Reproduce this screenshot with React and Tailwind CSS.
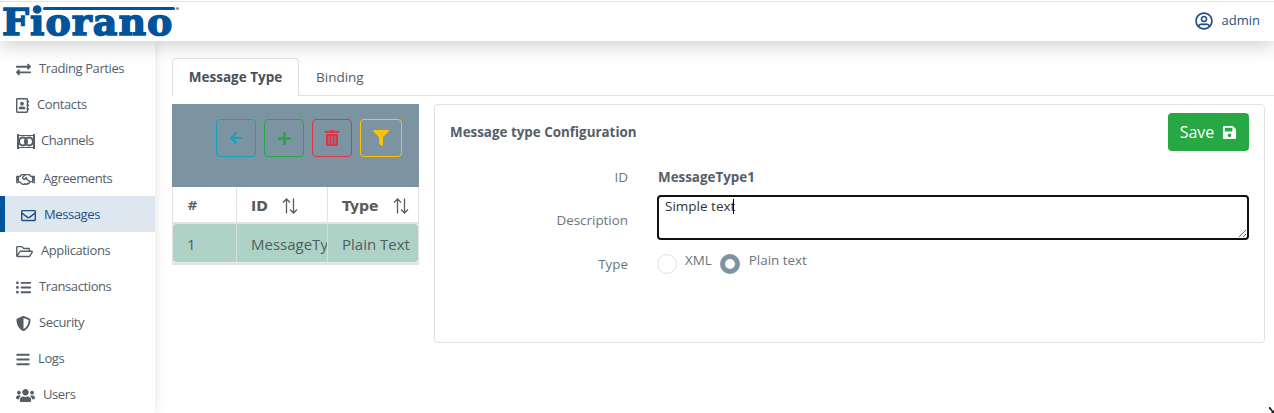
import React from "react";
import {
  FaExchangeAlt,
  FaRegAddressBook,
  FaRegHandshake,
  FaRegEnvelope,
  FaRegFolderOpen,
  FaListUl,
  FaShieldAlt,
  FaBars,
  FaUsers,
  FaRegUserCircle,
  FaSave,
  FaFilter,
  FaTrashAlt,
  FaPlus,
  FaArrowLeft,
} from "react-icons/fa";

const ChannelIcon = ({ className }) => (
  <svg viewBox="0 0 18 15" className={className} fill="none" stroke="currentColor">
    <path d="M1 0v15M17 0v15" strokeWidth="2" />
    <path d="M1 1.5h16M1 13.5h16" strokeWidth="1" />
    <circle cx="6" cy="7.5" r="4" strokeWidth="2.2" />
    <circle cx="12" cy="7.5" r="4" strokeWidth="2.2" />
  </svg>
);

const SortIcon = ({ className }) => (
  <svg viewBox="0 0 16 16" className={className} fill="none" stroke="#5b5b5b" strokeWidth="1.3">
    <path d="M4.5 15.5V1M1 4.5L4.5 1 8 4.5" />
    <path d="M11.5 0.5V15M8 11.5l3.5 3.5 3.5-3.5" />
  </svg>
);

const menu = [
  { label: "Trading Parties", icon: <FaExchangeAlt className="w-[15px] h-[15px]" />, gap: "gap-2" },
  { label: "Contacts", icon: <FaRegAddressBook className="w-[13px] h-[15px]" />, gap: "gap-2" },
  { label: "Channels", icon: <ChannelIcon className="w-[18px] h-[15px]" />, gap: "gap-[6px]", pad: "pl-[17px]" },
  { label: "Agreements", icon: <FaRegHandshake className="w-[19px] h-[15px]" />, gap: "gap-[8px]", extra: "mt-[2px]" },
  { label: "Messages", icon: <FaRegEnvelope className="w-[15px] h-[15px]" />, gap: "gap-[8px]", active: true },
  { label: "Applications", icon: <FaRegFolderOpen className="w-[17px] h-[15px]" />, gap: "gap-[8px]" },
  { label: "Transactions", icon: <FaListUl className="w-[15px] h-[15px]" />, gap: "gap-2" },
  { label: "Security", icon: <FaShieldAlt className="w-[15px] h-[15px]" />, gap: "gap-2" },
  { label: "Logs", icon: <FaBars className="w-[14px] h-[15px]" />, gap: "gap-2" },
  { label: "Users", icon: <FaUsers className="w-[19px] h-[15px]" />, gap: "gap-2" },
];

const App = () => {
  return (
    <div className="relative h-[413px] overflow-hidden bg-white font-['Open_Sans',sans-serif] text-[13px] text-[#555e68]">
      {/* HEADER */}
      <header className="relative z-20 h-[41px] bg-white shadow-[0_4px_20px_rgba(0,0,0,0.2)] flex items-center justify-between pr-[14px]">
        <div className="absolute top-px inset-x-0 h-px bg-[#e3e3e3]"></div>
        <div className="relative ml-[2px] h-[41px]">
          <div className="absolute left-[41px] top-[7px] w-[132px] h-[3px] bg-[#01549b] rounded-sm"></div>
          <div className="absolute left-[174px] top-[7px] w-[3px] h-[3px] bg-[#6f97bb] rounded-full"></div>
          <span className="block font-['DejaVu_Serif',serif] font-bold text-[38px] leading-[44px] tracking-[1px] text-[#01549b] [-webkit-text-stroke:1.5px_#01549b] whitespace-nowrap">
            Fiorano
          </span>
        </div>
        <div className="flex items-center gap-[9px] text-[#1f4f85]">
          <FaRegUserCircle className="w-[18px] h-[18px]" />
          <span>admin</span>
        </div>
      </header>

      <div className="flex h-[372px]">
        {/* SIDEBAR */}
        <nav className="relative z-10 w-[155px] shrink-0 pt-[9px] bg-white shadow-[0_0_10px_rgba(0,0,0,0.12)] tracking-[-0.4px]">
          {menu.map((item) => (
            <div
              key={item.label}
              className={
                item.active
                  ? `h-[36px] pt-[2px] flex items-center ${item.gap} pl-[16px] bg-[#dee6ef] border-l-[5px] border-[#01549b] text-[#1f4f85]`
                  : `h-[36px] pt-[2px] flex items-center ${item.gap} ${item.pad || "pl-[16px]"} ${item.extra || ""} text-[#555e68]`
              }
            >
              {item.icon}
              <span>{item.label}</span>
            </div>
          ))}
        </nav>

        {/* MAIN */}
        <main className="flex-1 pl-[17px] pr-[9px] pt-[17px]">
          <div className="h-[38px] flex border-b border-[#dee2e6] -mr-[9px] text-[13.5px]">
            <div className="w-[127px] h-[38px] flex items-center justify-center bg-white border border-b-0 border-[#dee2e6] rounded-t font-bold text-[#495057]">
              Message Type
            </div>
            <div className="flex items-center pl-[17px] pt-px text-[#555e68]">Binding</div>
          </div>

          <div className="flex gap-[15px] mt-[8px]">
            {/* LEFT: TOOLBAR AND TABLE */}
            <div className="w-[247px] shrink-0">
              <div className="h-[83px] bg-[#7c94a1] flex items-start gap-2 pl-[44px] pt-[15px]">
                <button className="w-[40px] h-[38px] flex items-center justify-center rounded border border-[#17a2b8] text-[#17a2b8]">
                  <FaArrowLeft className="w-[14px] h-[14px]" />
                </button>
                <button className="w-[40px] h-[38px] flex items-center justify-center rounded border border-[#28a745] text-[#28a745]">
                  <FaPlus className="w-[15px] h-[15px]" />
                </button>
                <button className="w-[40px] h-[38px] flex items-center justify-center rounded border border-[#dc3545] text-[#dc3545]">
                  <FaTrashAlt className="w-[14px] h-[16px]" />
                </button>
                <button className="w-[42px] h-[38px] flex items-center justify-center rounded border border-[#ffc107] text-[#ffc107]">
                  <FaFilter className="w-[16px] h-[16px]" />
                </button>
              </div>
              <div className="grid grid-cols-[65px_91px_91px] text-[#5b5b5b] font-['DejaVu_Sans',sans-serif] font-bold">
                <div className="h-[37px] flex items-center pl-[14px] pt-[3px] border-x border-b-2 border-[#e3e3e3] text-[13px]">#</div>
                <div className="h-[37px] flex items-center pl-[14px] pt-[3px] border-r border-b-2 border-[#e3e3e3] text-[14px]">
                  ID
                  <SortIcon className="w-4 h-4 ml-[14px]" />
                </div>
                <div className="h-[37px] flex items-center pl-[14px] pt-[3px] border-r border-b-2 border-[#e3e3e3] text-[14px]">
                  Type
                  <SortIcon className="w-4 h-4 ml-[14px]" />
                </div>
              </div>
              <div className="grid grid-cols-[64px_91px_90px] h-[41px] border-b-2 border-x border-[#e3e3e3] bg-[#e9ecec] text-[15px] text-[#4d5f5f]">
                <div className="h-[38px] flex items-center pl-[14px] pt-[3px] bg-[#afd2c6] rounded-l border-r border-[#d5dedb]">1</div>
                <div className="h-[38px] flex items-center pl-[14px] pt-[3px] bg-[#afd2c6] border-r border-[#d5dedb] overflow-hidden">
                  <span className="block w-[76px] overflow-hidden whitespace-nowrap">MessageType1</span>
                </div>
                <div className="h-[38px] flex items-center pl-[14px] pt-[3px] bg-[#afd2c6] rounded-r whitespace-nowrap">Plain Text</div>
              </div>
            </div>

            {/* RIGHT: CONFIGURATION CARD */}
            <section className="flex-1 h-[239px] border border-[#dee2e6] rounded pl-[15px] pr-[15px] pt-[8px] text-[13.4px]">
              <div className="flex items-center justify-between h-[38px]">
                <h2 className="font-bold text-[#555e68] pt-px">Message type Configuration</h2>
                <button className="w-[81px] h-[38px] flex items-center justify-center gap-2 rounded bg-[#28a745] text-white text-[16px]">
                  Save
                  <FaSave className="w-[15px] h-[15px]" />
                </button>
              </div>

              <div className="mt-[12px] grid grid-cols-[178px_1fr] gap-x-[29px] text-[#6b747c]">
                <div className="h-[32px] pb-[4px] flex items-center justify-end">ID</div>
                <div className="h-[32px] pb-[4px] pl-px flex items-center font-bold text-[#555e68]">MessageType1</div>

                <div className="h-[46px] pt-[4px] flex items-center justify-end">Description</div>
                <div className="relative h-[46px]">
                  <textarea
                    readOnly
                    defaultValue="Simple text"
                    className="block w-full h-[45px] resize-y border-2 border-[#111111] rounded px-[6px] py-0 text-[13.5px] leading-[18px] text-[#333333] outline-none"
                  />
                  <div className="absolute left-[76px] top-[4px] w-px h-[15px] bg-black"></div>
                </div>

                <div className="h-[48px] pb-[2px] flex items-center justify-end">Type</div>
                <div className="h-[48px] flex items-start pt-[9px]">
                  <div className="w-[20px] h-[20px] mt-[4px] rounded-full border border-[#dee2e6]"></div>
                  <span className="ml-2 leading-[20px]">XML</span>
                  <div className="w-[20px] h-[20px] mt-[4px] ml-2 rounded-full border-[5px] border-[#7c94a1]"></div>
                  <span className="ml-[9px] leading-[20px]">Plain text</span>
                </div>
              </div>
            </section>
          </div>
        </main>
      </div>

      {/* mouse pointer left in the corner of the capture */}
      <svg viewBox="0 0 6 7" className="absolute left-[1269px] top-[407px] w-[5px] h-[6px] text-[#222222]" fill="currentColor">
        <path d="M0 0h1.5l1.5 2 1.5 2H6v3H3V5L0 2z" />
      </svg>
    </div>
  );
};

export default App;
